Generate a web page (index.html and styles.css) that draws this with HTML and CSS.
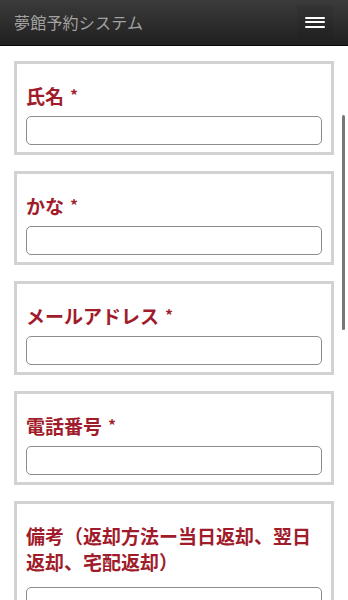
FILE: index.html
```html
<!DOCTYPE html>
<html lang="ja">
<head>
    <meta charset="UTF-8">
    <meta name="viewport" content="width=device-width, initial-scale=1.0">
    <title>夢館予約システム</title>
    <link rel="stylesheet" href="styles.css">
</head>
<body>
    <header class="navbar">
        <span class="brand">夢館予約システム</span>
        <button class="navbar-toggle" type="button">
            <span class="icon-bar"></span>
            <span class="icon-bar"></span>
            <span class="icon-bar"></span>
        </button>
    </header>

    <form class="reserve-form">
        <div class="field-box">
            <label class="field-label">氏名 <span class="req">*</span></label>
            <input type="text" class="field-input">
        </div>
        <div class="field-box">
            <label class="field-label">かな <span class="req">*</span></label>
            <input type="text" class="field-input">
        </div>
        <div class="field-box">
            <label class="field-label">メールアドレス <span class="req">*</span></label>
            <input type="email" class="field-input">
        </div>
        <div class="field-box">
            <label class="field-label">電話番号 <span class="req">*</span></label>
            <input type="tel" class="field-input">
        </div>
        <div class="field-box">
            <label class="field-label">備考（返却方法ー当日返却、翌日返却、宅配返却）</label>
            <textarea class="field-input field-note" rows="3"></textarea>
        </div>
    </form>

    <div class="scroll-thumb"></div>
</body>
</html>
```

FILE: styles.css
```css
body {
    margin: 0;
    background: #fff;
    font-family: "Noto Sans CJK JP", "Noto Sans", sans-serif;
}
.navbar {
    height: 45px;
    border-bottom: 1px solid #080808;
    background: linear-gradient(#3b3b3b, #202020);
    display: flex;
    align-items: center;
    justify-content: space-between;
    padding: 0 14px;
}
.brand {
    color: #a2a2a2;
    font-size: 16px;
    letter-spacing: 0.2px;
    margin-top: -1px;
}
.navbar-toggle {
    background: rgba(0, 0, 0, 0.06);
    border: none;
    width: 36px;
    height: 34px;
    display: flex;
    flex-direction: column;
    align-items: center;
    justify-content: center;
    gap: 2.5px;
    padding: 0;
    margin-right: 1px;
    margin-top: -1px;
}
.icon-bar {
    display: block;
    width: 20px;
    height: 2px;
    border-radius: 1px;
    background: #fff;
}
.reserve-form {
    padding: 15px 14px 0;
}
.field-box {
    border: 3px solid #d2d2d2;
    padding: 19px 9px 7px;
    margin-bottom: 16px;
}
.field-label {
    display: block;
    color: #a01c2b;
    font-size: 19px;
    font-weight: bold;
    line-height: 26px;
    margin-bottom: 7px;
}
.req {
    font-size: 15px;
    line-height: 0;
    position: relative;
    top: -3px;
    margin-left: 2px;
}
.field-input {
    display: block;
    box-sizing: border-box;
    width: 100%;
    height: 29px;
    margin: 0;
    border: 1px solid #8c8c8c;
    border-radius: 5px;
    background: #fff;
    font-family: inherit;
}
.field-note {
    height: 70px;
    margin-top: 12px;
    resize: none;
}
.scroll-thumb {
    position: fixed;
    right: 3px;
    top: 115px;
    width: 3px;
    height: 215px;
    border-radius: 2px;
    background: #777;
}
```
